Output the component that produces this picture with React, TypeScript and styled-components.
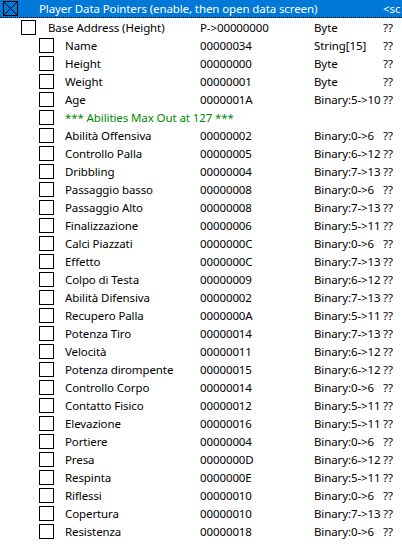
import React from "react";
import styled, { createGlobalStyle } from "styled-components";

const Global = createGlobalStyle`
  html, body { margin: 0; padding: 0; background: #ffffff; }
  body { font-family: "Noto Sans", "Segoe UI", Tahoma, sans-serif; font-size: 11.5px; letter-spacing: -0.1px; }
`;

type Entry = {
  level: 0 | 1 | 2;
  desc: string;
  addr?: string;
  type?: string;
  value?: string;
  checked?: boolean;
  selected?: boolean;
  comment?: boolean;
};

const rows: Entry[] = [
  { level: 0, desc: "Player Data Pointers (enable, then open data screen)", value: "<sc", checked: true, selected: true },
  { level: 1, desc: "Base Address (Height)", addr: "P->00000000", type: "Byte", value: "??" },
  { level: 2, desc: "Name", addr: "00000034", type: "String[15]", value: "??" },
  { level: 2, desc: "Height", addr: "00000000", type: "Byte", value: "??" },
  { level: 2, desc: "Weight", addr: "00000001", type: "Byte", value: "??" },
  { level: 2, desc: "Age", addr: "0000001A", type: "Binary:5->10", value: "??" },
  { level: 2, desc: "*** Abilities Max Out at 127 ***", comment: true },
  { level: 2, desc: "Abilità Offensiva", addr: "00000002", type: "Binary:0->6", value: "??" },
  { level: 2, desc: "Controllo Palla", addr: "00000005", type: "Binary:6->12", value: "??" },
  { level: 2, desc: "Dribbling", addr: "00000004", type: "Binary:7->13", value: "??" },
  { level: 2, desc: "Passaggio basso", addr: "00000008", type: "Binary:0->6", value: "??" },
  { level: 2, desc: "Passaggio Alto", addr: "00000008", type: "Binary:7->13", value: "??" },
  { level: 2, desc: "Finalizzazione", addr: "00000006", type: "Binary:5->11", value: "??" },
  { level: 2, desc: "Calci Piazzati", addr: "0000000C", type: "Binary:0->6", value: "??" },
  { level: 2, desc: "Effetto", addr: "0000000C", type: "Binary:7->13", value: "??" },
  { level: 2, desc: "Colpo di Testa", addr: "00000009", type: "Binary:6->12", value: "??" },
  { level: 2, desc: "Abilità Difensiva", addr: "00000002", type: "Binary:7->13", value: "??" },
  { level: 2, desc: "Recupero Palla", addr: "0000000A", type: "Binary:5->11", value: "??" },
  { level: 2, desc: "Potenza Tiro", addr: "00000014", type: "Binary:7->13", value: "??" },
  { level: 2, desc: "Velocità", addr: "00000011", type: "Binary:6->12", value: "??" },
  { level: 2, desc: "Potenza dirompente", addr: "00000015", type: "Binary:6->12", value: "??" },
  { level: 2, desc: "Controllo Corpo", addr: "00000014", type: "Binary:0->6", value: "??" },
  { level: 2, desc: "Contatto Fisico", addr: "00000012", type: "Binary:5->11", value: "??" },
  { level: 2, desc: "Elevazione", addr: "00000016", type: "Binary:5->11", value: "??" },
  { level: 2, desc: "Portiere", addr: "00000004", type: "Binary:0->6", value: "??" },
  { level: 2, desc: "Presa", addr: "0000000D", type: "Binary:6->12", value: "??" },
  { level: 2, desc: "Respinta", addr: "0000000E", type: "Binary:5->11", value: "??" },
  { level: 2, desc: "Riflessi", addr: "00000010", type: "Binary:0->6", value: "??" },
  { level: 2, desc: "Copertura", addr: "00000010", type: "Binary:7->13", value: "??" },
  { level: 2, desc: "Resistenza", addr: "00000018", type: "Binary:0->6", value: "??" },
];

const List = styled.div`
  width: 402px;
  height: 550px;
  overflow: hidden;
  background: #ffffff;
  color: #000000;
`;

const Row = styled.div<{ $selected?: boolean }>`
  display: grid;
  grid-template-columns: 200px 114px 69px 1fr;
  height: 18px;
  box-sizing: border-box;
  align-items: center;
  white-space: nowrap;
  background: ${(p) => (p.$selected ? "#0078d7" : "transparent")};
  color: ${(p) => (p.$selected ? "#ffffff" : "#000000")};
  border-bottom: ${(p) => (p.$selected ? "1px dotted #000" : "none")};
`;

const indent: Record<number, { box: number; gap: number }> = {
  0: { box: 3, gap: 21 },
  1: { box: 21, gap: 12 },
  2: { box: 39, gap: 11 },
};

const DescCell = styled.div<{ $level: number }>`
  display: flex;
  align-items: center;
  padding-left: ${(p) => indent[p.$level].box}px;
  gap: ${(p) => indent[p.$level].gap}px;
  overflow: visible;
  position: relative;
  z-index: 1;
`;

const Box = styled.span<{ $selected?: boolean }>`
  width: 15px;
  height: 15px;
  box-sizing: border-box;
  border: 1px solid #000;
  background: ${(p) => (p.$selected ? "#0078d7" : "#ffffff")};
  flex: none;
  display: flex;
  svg { display: block; }
`;

const Desc = styled.span<{ $comment?: boolean }>`
  color: ${(p) => (p.$comment ? "#008a00" : "inherit")};
`;

const Cell = styled.div`
  overflow: hidden;
`;

export default function App() {
  return (
    <>
      <Global />
      <List>
        {rows.map((r, i) => (
          <Row key={i} $selected={r.selected}>
            <DescCell $level={r.level}>
              <Box $selected={r.selected}>
                {r.checked && (
                  <svg width="13" height="13" viewBox="0 0 13 13">
                    <path d="M0 0L13 13M13 0L0 13" stroke="#000" strokeWidth="1" />
                  </svg>
                )}
              </Box>
              <Desc $comment={r.comment}>{r.desc}</Desc>
            </DescCell>
            <Cell>{r.addr ?? ""}</Cell>
            <Cell>{r.type ?? ""}</Cell>
            <Cell>{r.value ?? ""}</Cell>
          </Row>
        ))}
      </List>
    </>
  );
}
